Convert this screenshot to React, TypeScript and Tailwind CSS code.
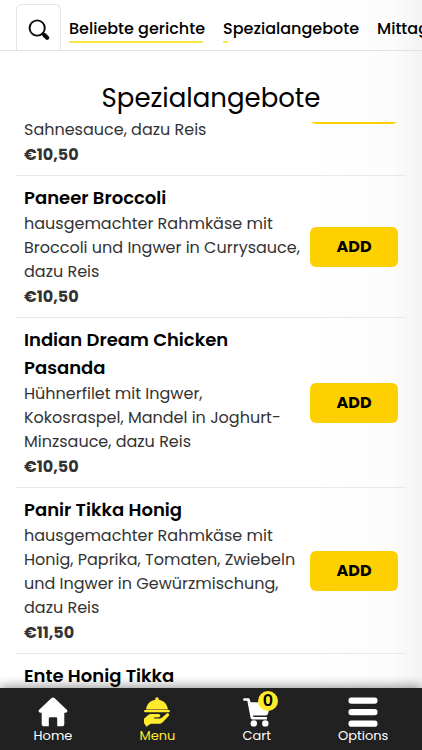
type Dish = {
  name: string;
  text: string;
  price: string;
};

const dishes: Dish[] = [
  {
    name: "Paneer Broccoli",
    text: "hausgemachter Rahmkäse mit\nBroccoli und Ingwer in Currysauce,\ndazu Reis",
    price: "€10,50",
  },
  {
    name: "Indian Dream Chicken\nPasanda",
    text: "Hühnerfilet mit Ingwer,\nKokosraspel, Mandel in Joghurt-\nMinzsauce, dazu Reis",
    price: "€10,50",
  },
  {
    name: "Panir Tikka Honig",
    text: "hausgemachter Rahmkäse mit\nHonig, Paprika, Tomaten, Zwiebeln\nund Ingwer in Gewürzmischung,\ndazu Reis",
    price: "€11,50",
  },
];

function SearchIcon() {
  return (
    <svg width="22" height="22" viewBox="0 0 22 22" fill="none" stroke="#0a0a0a" strokeLinecap="round" aria-hidden="true">
      <circle cx="9.2" cy="9" r="7.6" strokeWidth="1.9" />
      <path d="M14.7 14.4L16.4 16.1" strokeWidth="2" />
      <path d="M16.3 16L19.1 18.8" strokeWidth="4.2" />
    </svg>
  );
}

function HomeIcon() {
  return (
    <svg width="30" height="30" viewBox="0 0 30 30" fill="currentColor" aria-hidden="true">
      <path d="M13.5 1.1a2.3 2.3 0 0 1 3 0L28.800 12.700c1.300 1.300.5 3-1.100 3h-1.400v11a2.600 2.600 0 0 1-2.600 2.600h-4.500V21.500a1.300 1.300 0 0 0-1.300-1.300h-5.800a1.300 1.300 0 0 0-1.300 1.300v7.800H6.300a2.600 2.600 0 0 1-2.600-2.600v-11H2.300c-1.600 0-2.400-1.700-1.100-3z" />
    </svg>
  );
}

function MenuIcon() {
  return (
    <svg width="28" height="30" viewBox="0 0 28 30" fill="currentColor" aria-hidden="true">
      <path d="M12.200 2.800V2.100a1.800 1.800 0 0 1 3.600 0v.7c5 .8 8.700 4.600 9.100 9.700H3.100c.4-5.100 4.100-8.900 9.100-9.700z" />
      <rect x="1" y="13" width="26" height="2.200" rx="1.100" />
      <path d="M1.500 21.200l4-3.500c.7-.6 1.500-.8 2.400-.8h7.600c2.300 0 2.500 3.100.2 3.300l-4.500.4c-.7.100-.6.900.1.900h5.500c.8 0 1.400-.3 1.900-.8l4.500-3.800c1.900-1.500 3.900.5 2.500 2.200l-6.200 6.500c-.7.700-1.500 1.100-2.500 1.100H8.500c-.8 0-1.400.2-2 .7l-2.300 1.900c-.4.300-.8.300-1.100-.1L1.300 26.500c-.3-.4-.4-.8-.3-1.300l-.1-2.700c0-.5.200-.9.600-1.300z" />
    </svg>
  );
}

function CartIcon() {
  return (
    <svg width="28" height="30" viewBox="0 0 28 30" fill="currentColor" aria-hidden="true">
      <path d="M1.300 1.300h3.800c1 0 1.700.6 1.900 1.500l.5 2.500h18.300c1 0 1.700.9 1.500 1.900l-2.200 9.300c-.3 1.200-1.200 2-2.500 2H10.100l.2 1c.1.400.4.600.8.600h12.800v2.500H9.800c-1.200 0-2-.7-2.200-1.800L4.400 4.300c-.1-.4-.3-.5-.7-.5H1.300a1.250 1.250 0 0 1 0-2.500z" />
      <circle cx="10.800" cy="26.400" r="3.200" />
      <circle cx="22.300" cy="26.400" r="3.200" />
    </svg>
  );
}

function OptionsIcon() {
  return (
    <svg width="30" height="30" viewBox="0 0 30 30" fill="currentColor" aria-hidden="true">
      <rect x="0.500" y="0.500" width="29" height="6.300" rx="2.800" />
      <rect x="0.500" y="12" width="29" height="6.300" rx="2.800" />
      <rect x="0.500" y="23.400" width="29" height="6.300" rx="2.800" />
    </svg>
  );
}

function DishRow({ dish }: { dish: Dish }) {
  return (
    <li className="flex items-center justify-between border-b border-[#e8e8e8] py-2 pr-2 pl-2">
      <div className="min-w-0 whitespace-pre">
        <h3 className="text-lg leading-7 font-semibold text-black">{dish.name}</h3>
        <p className="text-base leading-6 text-[#333333]">{dish.text}</p>
        <p className="text-base leading-[25px] font-bold text-[#333333]">{dish.price}</p>
      </div>
      <button
        type="button"
        aria-label={`Add ${dish.name}`}
        className="h-10 w-[88px] shrink-0 rounded-md bg-[#ffd000] text-base font-bold text-black"
      >
        ADD
      </button>
    </li>
  );
}

export default function App() {
  return (
    <div className="flex h-screen flex-col overflow-hidden bg-[linear-gradient(to_right,#ffffff_75%,#fcfcfc_93%,#f3f3f3)] font-[Poppins,Inter,sans-serif] text-black">
      <header className="flex h-[51px] shrink-0 items-end overflow-hidden border-b border-[#e2e2e2] pl-4">
        <button
          type="button"
          aria-label="Suche"
          className="flex h-[46px] w-[45px] shrink-0 items-center justify-center rounded-t-md border border-b-0 border-[#e5e5e5] pt-1"
        >
          <SearchIcon />
        </button>
        <nav className="flex gap-[18px] pb-[7px] pl-2 text-base leading-6 font-medium whitespace-nowrap">
          <a href="#beliebt">
            Beliebte gerichte
            <span className="block h-[2px] w-[134px] rounded-full bg-[#f8e840]" />
          </a>
          <a href="#spezial">
            Spezialangebote
            <span className="block h-[2px] w-[5px] rounded-full bg-[#f8e840]" />
          </a>
          <a href="#mittag">Mittagsangebote</a>
        </nav>
      </header>

      <h2 className="shrink-0 pt-[27px] pb-1 text-center text-[26px] leading-10">Spezialangebote</h2>

      <main className="min-h-0 flex-1 overflow-hidden px-4">
        <ul>
          <li className="flex h-[54px] items-start justify-between overflow-hidden border-b border-[#e8e8e8] px-2">
            <div>
              <p className="text-base leading-4 text-[#333333]">Sahnesauce, dazu Reis</p>
              <p className="mt-1 text-base leading-[25px] font-bold text-[#333333]">€10,50</p>
            </div>
            <button type="button" aria-label="Add" className="-mt-[38px] h-10 w-[88px] rounded-md bg-[#ffd000]" />
          </li>
          {dishes.map((dish) => (
            <DishRow key={dish.name} dish={dish} />
          ))}
          <li className="px-2 py-2">
            <h3 className="text-lg leading-7 font-semibold text-black">Ente Honig Tikka</h3>
          </li>
        </ul>
      </main>

      <nav className="z-10 flex h-[62px] shrink-0 justify-around bg-[#212121] pt-[9px] text-[13px] leading-[18px] text-white shadow-[0_-2px_10px_rgba(0,0,0,0.4)]">
        <a href="#home" className="flex flex-col items-center">
          <HomeIcon />
          Home
        </a>
        <a href="#menu" className="flex flex-col items-center text-[#ffeb2e]">
          <MenuIcon />
          Menu
        </a>
        <a href="#cart" className="relative flex flex-col items-center">
          <CartIcon />
          <span className="absolute -top-[6px] -right-[7px] flex size-5 items-center justify-center rounded-full bg-[#ffeb2e] text-base font-semibold text-black">
            0
          </span>
          Cart
        </a>
        <a href="#options" className="flex flex-col items-center">
          <OptionsIcon />
          Options
        </a>
      </nav>
    </div>
  );
}
